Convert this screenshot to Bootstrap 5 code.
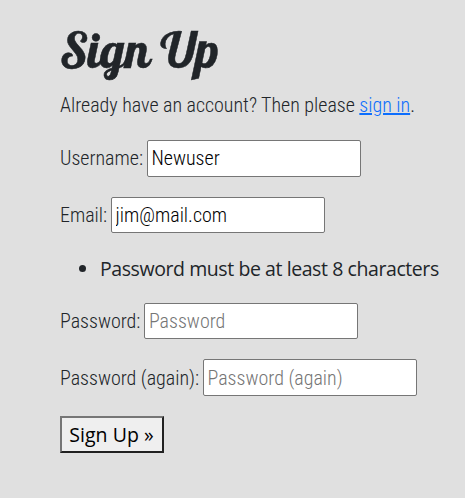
<!DOCTYPE html>
<html lang="en">
<head>
<meta charset="utf-8">
<meta name="viewport" content="width=device-width, initial-scale=1">
<title>Sign Up</title>
<link href="https://cdn.jsdelivr.net/npm/bootstrap@5.3.0/dist/css/bootstrap.min.css" rel="stylesheet">
<script src="https://cdn.jsdelivr.net/npm/bootstrap@5.3.0/dist/js/bootstrap.bundle.min.js" defer></script>
<style>
body{background:#e0e0e0;color:#212529;font:300 20px/30px "Roboto Condensed",Roboto,sans-serif;font-stretch:75%;letter-spacing:-.015px;overflow:hidden}
.signup{padding:20px 0 0 60px;white-space:nowrap}
h1{font:500 49px/60px Lobster,"Liberation Serif",serif;letter-spacing:-.1px;-webkit-text-stroke:.5px #212529;margin:0 0 10px}
.field-row{height:36.7px;margin-bottom:20px}
.field-row input{font:inherit;font-stretch:75%;width:214px;height:36.7px;border:1px solid #767676;border-radius:2px;padding:0 4px 0 3.5px;color:#000;background:#fff}
.field-row input::placeholder{color:#757575;opacity:1}
.intro{margin-bottom:20px}
.intro a{color:#0d6efd;text-decoration-thickness:2px}
.rules{font:400 19.5px/30px "Segoe UI","Open Sans",sans-serif;letter-spacing:-.42px;padding:1px 0 0 40px;margin-bottom:18.3px}
.send{font:400 19.5px/30px "Segoe UI","Open Sans",sans-serif;letter-spacing:.05px;width:104px;height:37px;border:2px solid;border-color:#767676 #212121 #212121 #767676;background:#efefef;color:#000;padding:1px 1px 0 0}
</style>
</head>
<body>
<main class="signup">
<h1>Sign Up</h1>
<p class="intro">Already have an account? Then please <a href="#">sign in</a>.</p>
<form>
<div class="field-row d-flex align-items-center gap-1"><label for="u">Username:</label><input id="u" type="text" value="Newuser"></div>
<div class="field-row d-flex align-items-center gap-1"><label for="e">Email:</label><input id="e" type="email" value="jim@mail.com"></div>
<ul class="rules"><li>Password must be at least 8 characters</li></ul>
<div class="field-row d-flex align-items-center gap-1"><label for="p">Password:</label><input id="p" type="password" placeholder="Password"></div>
<div class="field-row d-flex align-items-center gap-1"><label for="q">Password (again):</label><input id="q" type="password" placeholder="Password (again)"></div>
<button class="send" type="button">Sign Up »</button>
</form>
</main>
</body>
</html>
